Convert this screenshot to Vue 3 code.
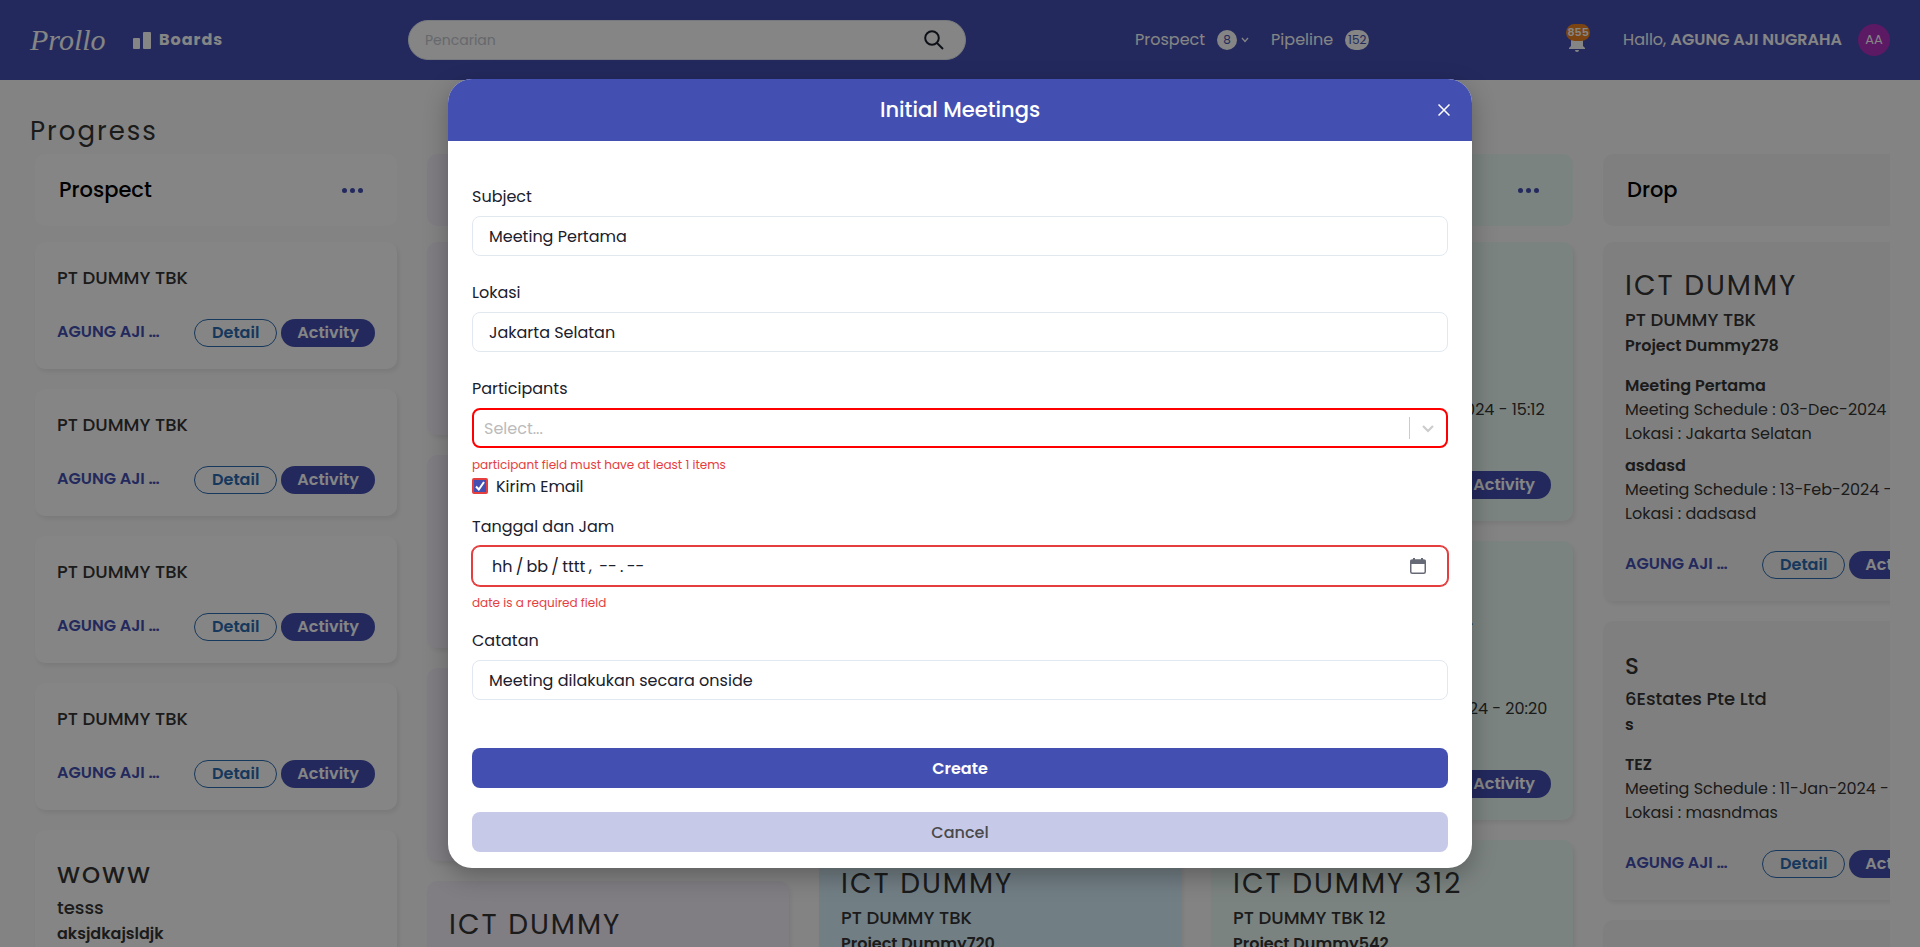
<script setup>
import { ref } from 'vue'

const search = ref('')
const form = ref({
  subject: 'Meeting Pertama',
  location: 'Jakarta Selatan',
  participant: '',
  sendEmail: true,
  date: 'hh\u2009/\u2009bb\u2009/\u2009tttt\u2009, \u2009--\u2009.\u2009--',
  note: 'Meeting dilakukan secara onside',
})

const owner = 'AGUNG AJI …'
const simple = { company: 'PT DUMMY TBK' }
const ict = { title: 'ICT DUMMY', company: 'PT DUMMY TBK', project: 'Project Dummy720' }
const compact = { blank: 'compact' }
const tall = { blank: 'tall' }

const columns = [
  {
    id: 'prospect',
    name: 'Prospect',
    tone: 'white',
    cards: [simple, simple, simple, simple, { title: 'WOWW', small: true, company: 'tesss', project: 'aksjdkajsldjk' }],
  },
  { id: 'meeting', tone: 'purple', cards: [compact, compact, compact, ict] },
  { id: 'proposal', tone: 'blue', cards: [tall, tall, ict] },
  {
    id: 'deal',
    tone: 'green',
    cards: [
      { ...ict, meetings: [{ subject: 'Meeting Pertama', schedule: '03-Dec-2024 - 15:12', place: 'Jakarta' }] },
      {
        ...ict,
        company: 'PT. DUMMY INTERNASIONAL',
        meetings: [{ subject: 'Meeting Pertama', schedule: '14-Feb-2024 - 20:20', place: 'Jakarta' }],
      },
      { title: 'ICT DUMMY 312', company: 'PT DUMMY TBK 12', project: 'Project Dummy542' },
    ],
  },
  {
    id: 'drop',
    name: 'Drop',
    tone: 'grey',
    cards: [
      {
        title: 'ICT DUMMY',
        company: 'PT DUMMY TBK',
        project: 'Project Dummy278',
        meetings: [
          { subject: 'Meeting Pertama', schedule: '03-Dec-2024 - 15:12', place: 'Jakarta Selatan' },
          { subject: 'asdasd', schedule: '13-Feb-2024 - 10:00', place: 'dadsasd' },
        ],
      },
      {
        title: 'S',
        small: true,
        company: '6Estates Pte Ltd',
        project: 's',
        meetings: [{ subject: 'TEZ', schedule: '11-Jan-2024 - 10:00', place: 'masndmas' }],
      },
      compact,
    ],
  },
]
</script>

<template>
  <div class="page">
    <header class="navbar">
      <div class="brand">
        <a href="#" class="logo">Prollo</a>
        <a href="#" class="boards">
          <svg width="18" height="17" viewBox="0 0 18 17" aria-hidden="true">
            <rect x="0" y="6" width="7" height="11" rx="1" />
            <rect x="10" y="0" width="8" height="17" rx="1" />
          </svg>
          Boards
        </a>
      </div>
      <form class="search" @submit.prevent>
        <input v-model="search" type="text" placeholder="Pencarian" aria-label="Pencarian" />
        <button type="submit" aria-label="Cari">
          <svg width="20" height="20" viewBox="0 0 20 20" aria-hidden="true">
            <circle cx="8" cy="8" r="6.8" />
            <path d="M13 13l6 6" />
          </svg>
        </button>
      </form>
      <nav class="links">
        <a href="#">Prospect <span class="count">8</span>
          <svg class="caret" width="8" height="6" viewBox="0 0 8 6" aria-hidden="true"><path d="M1 1l3 3.4L7 1" /></svg>
        </a>
        <a href="#">Pipeline <span class="count">152</span></a>
      </nav>
      <div class="user">
        <button class="bell" aria-label="Notifikasi">
          <svg width="24" height="24" viewBox="0 0 24 24" aria-hidden="true">
            <path d="M12 22a2 2 0 0 0 2-2h-4a2 2 0 0 0 2 2zm6-6v-5c0-3.07-1.63-5.64-4.5-6.32V4a1.5 1.5 0 0 0-3 0v.68C7.64 5.36 6 7.92 6 11v5l-2 2v1h16v-1z" />
          </svg>
          <span>855</span>
        </button>
        <p class="hello">Hallo, <strong>AGUNG AJI NUGRAHA</strong></p>
        <span class="avatar">AA</span>
      </div>
    </header>

    <main class="content">
      <h1>Progress</h1>
      <div class="board">
        <section v-for="col in columns" :key="col.id" class="column" :class="col.tone">
          <div class="column-head">
            <h2>{{ col.name }}</h2>
            <button class="dots" aria-label="Menu"><i></i><i></i><i></i></button>
          </div>
          <article v-for="(card, i) in col.cards" :key="i" class="card" :class="card.blank">
            <template v-if="!card.blank">
              <h3 v-if="card.title"><span :class="{ small: card.small }">{{ card.title }}</span></h3>
              <p class="company">{{ card.company }}</p>
              <p v-if="card.project" class="strong">{{ card.project }}</p>
              <div v-if="card.meetings" class="meetings">
                <div v-for="m in card.meetings" :key="m.subject">
                  <p class="strong">{{ m.subject }}</p>
                  <p>Meeting Schedule : {{ m.schedule }}</p>
                  <p>Lokasi : {{ m.place }}</p>
                </div>
              </div>
              <div class="card-foot">
                <span class="owner">{{ owner }}</span>
                <button class="pill outline">Detail</button>
                <button class="pill">Activity</button>
              </div>
            </template>
          </article>
        </section>
      </div>
    </main>

    <div class="overlay">
      <div class="modal" role="dialog" aria-modal="true" aria-labelledby="modal-title">
        <div class="modal-head">
          <h2 id="modal-title">Initial Meetings</h2>
          <button class="close" aria-label="Tutup">
            <svg width="12" height="12" viewBox="0 0 12 12" aria-hidden="true"><path d="M0.500 0.500l11 11M11.500 0.500l-11 11" /></svg>
          </button>
        </div>
        <form class="form" @submit.prevent>
          <div class="field">
            <label for="subject">Subject</label>
            <input id="subject" v-model="form.subject" type="text" />
          </div>
          <div class="field">
            <label for="location">Lokasi</label>
            <input id="location" v-model="form.location" type="text" />
          </div>
          <div class="field tight">
            <label for="participant">Participants</label>
            <div class="select">
              <select id="participant" v-model="form.participant">
                <option value="">Select...</option>
              </select>
              <svg width="40" height="22" viewBox="0 0 40 22" aria-hidden="true">
                <path class="bar" d="M1.500 0v22" />
                <path class="arrow" d="M15 9l5 5 5-5" />
              </svg>
            </div>
            <p class="error">participant field must have at least 1 items</p>
          </div>
          <label class="check">
            <span class="box">
              <input v-model="form.sendEmail" type="checkbox" />
              <svg width="10" height="10" viewBox="0 0 10 10" aria-hidden="true"><path d="M1 5.500L3.800 8.500 9 1" /></svg>
            </span>
            <span class="check-text">Kirim Email</span>
          </label>
          <div class="field short">
            <label for="date">Tanggal dan Jam</label>
            <div class="date">
              <input id="date" v-model="form.date" type="text" />
              <button type="button" aria-label="Pilih tanggal">
                <svg width="16" height="16" viewBox="0 0 16 16" aria-hidden="true">
                  <rect x="0.750" y="2" width="14.500" height="13.250" rx="1.500" />
                  <path d="M0.500 2h15v4h-15zM3 0h2v3H3zM11 0h2v3h-2z" />
                </svg>
              </button>
            </div>
            <p class="error">date is a required field</p>
          </div>
          <div class="field last">
            <label for="note">Catatan</label>
            <input id="note" v-model="form.note" type="text" />
          </div>
          <button type="submit" class="action create">Create</button>
          <button type="button" class="action cancel">Cancel</button>
        </form>
      </div>
    </div>
  </div>
</template>

<style>
body {
  background: #fcfcfc;
}
</style>

<style scoped>
.page,
.page * {
  box-sizing: border-box;
}
.page {
  position: relative;
  height: 100vh;
  overflow: hidden;
  display: flex;
  flex-direction: column;
  font-family: Poppins, Inter, 'Open Sans', sans-serif;
  font-size: 16px;
  line-height: 24px;
  color: #343434;
}
h1,
h2,
h3,
p {
  margin: 0;
}
a {
  color: inherit;
  text-decoration: none;
}
button,
input,
select {
  font: inherit;
}
button {
  border: 0;
  padding: 0;
  background: none;
}

.navbar {
  flex: none;
  height: 80px;
  padding: 0 30px;
  display: grid;
  grid-template-columns: 378px 30% 1fr auto;
  align-items: center;
  background: #4350b2;
  color: #fff;
}
.brand {
  display: flex;
  align-items: center;
  gap: 28px;
}
.logo {
  width: 75px;
  font-family: 'Liberation Serif', serif;
  font-style: italic;
  font-size: 30px;
  line-height: 32px;
}
.boards {
  display: flex;
  align-items: center;
  gap: 8px;
  font-weight: 700;
  letter-spacing: 1px;
}
.boards svg {
  fill: #fff;
}
.search {
  width: 558px;
  max-width: 100%;
  height: 40px;
  display: flex;
  align-items: center;
  padding: 0 21px 0 16px;
  border: 1px solid #e2e8f0;
  border-radius: 20px;
  background: #fff;
}
.search input {
  flex: 1;
  min-width: 0;
  border: 0;
  padding: 0;
  outline: 0;
  background: none;
  font-size: 14px;
}
.search input::placeholder {
  color: #c4c8d0;
}
.search button {
  display: flex;
}
.search svg {
  fill: none;
  stroke: #1a202c;
  stroke-width: 2;
}
.links {
  display: flex;
  gap: 22px;
  padding-left: 169px;
}
.links a {
  display: flex;
  align-items: center;
}
.count {
  min-width: 20px;
  height: 20px;
  margin-left: 12px;
  padding: 0 3px;
  border-radius: 10px;
  background: #fff;
  color: #4350b2;
  font-size: 12px;
  line-height: 20px;
  text-align: center;
}
.caret {
  margin-left: 4px;
  fill: none;
  stroke: #fff;
  stroke-width: 1.300;
}
.user {
  display: flex;
  align-items: center;
}
.bell {
  position: relative;
  display: flex;
  margin-right: 34px;
  padding-top: 4px;
}
.bell svg {
  fill: #fff;
}
.bell span {
  position: absolute;
  top: -2px;
  left: 1px;
  width: 24px;
  height: 17px;
  border-radius: 9px;
  background: #ed8322;
  color: #fff;
  font-size: 11px;
  font-weight: 600;
  line-height: 17px;
}
.hello strong {
  font-weight: 600;
}
.avatar {
  width: 32px;
  height: 32px;
  margin-left: 16px;
  border-radius: 50%;
  background: #b030c0;
  font-size: 13px;
  line-height: 32px;
  text-align: center;
}

.content {
  flex: 1;
  min-height: 0;
  padding: 32px 30px 0;
}
h1 {
  font-size: 26px;
  line-height: 38px;
  font-weight: 400;
  letter-spacing: 2px;
}
.board {
  display: flex;
  gap: 30px;
  padding: 4px 5px 0;
  overflow: hidden;
}
.column {
  flex: none;
  width: 362px;
  display: flex;
  flex-direction: column;
  gap: 20px;
}
.column-head {
  height: 72px;
  margin-bottom: -4px;
  padding: 0 34px 0 24px;
  display: flex;
  align-items: center;
  justify-content: space-between;
  border-radius: 10px;
  color: #000;
}
.column-head h2 {
  font-size: 21px;
  line-height: 30px;
  font-weight: 500;
}
.dots {
  display: flex;
  gap: 3px;
}
.dots i {
  width: 5px;
  height: 5px;
  border-radius: 50%;
  background: #4350b2;
}
.card {
  padding: 22px;
  border-radius: 10px;
  box-shadow: 2px 3px 5px rgba(0, 0, 0, 0.08);
}
.compact {
  min-height: 193px;
}
.tall {
  min-height: 279px;
}
.white > * {
  background: #fff;
}
.purple > * {
  background: #f6f0fb;
}
.blue > * {
  background: #d9f2fe;
}
.green > * {
  background: #ebfcf5;
}
.grey > * {
  background: #f4f4f4;
}
.card p {
  white-space: nowrap;
}
.card h3 {
  padding-top: 2px;
  font-size: 28px;
  line-height: 40px;
  font-weight: 400;
  letter-spacing: 2px;
}
.card .small {
  font-size: 23px;
  line-height: 24px;
  font-weight: 500;
}
.card .company {
  font-size: 18px;
  line-height: 28px;
  font-weight: 500;
}
.card .strong {
  font-weight: 600;
}
.meetings {
  display: grid;
  gap: 8px;
  padding-top: 16px;
}
.card-foot {
  display: flex;
  align-items: center;
  gap: 4px;
  margin-top: 27px;
}
.meetings + .card-foot {
  margin-top: 25px;
}
.owner {
  flex: 1;
  padding-bottom: 2px;
  color: #4350b2;
  font-weight: 600;
  white-space: nowrap;
}
.pill {
  height: 28px;
  padding: 0 16px;
  border-radius: 14px;
  background: #4350b2;
  color: #fff;
  font-weight: 600;
}
.pill.outline {
  padding: 0 17px;
  border: 1px solid #2b6cb0;
  background: none;
  color: #2b6cb0;
}

.overlay {
  position: absolute;
  inset: 0;
  display: flex;
  align-items: center;
  justify-content: center;
  background: rgba(0, 0, 0, 0.48);
}
.modal {
  width: 1024px;
  max-width: 100%;
  overflow: hidden;
  border-radius: 24px;
  background: #fff;
  color: #1a202c;
  box-shadow: 0 8px 24px rgba(0, 0, 0, 0.28);
}
.modal-head {
  height: 62px;
  display: grid;
  grid-template-columns: 1fr auto 1fr;
  align-items: center;
  padding: 0 22px;
  background: #4350b2;
  color: #fff;
}
.modal-head h2 {
  grid-column: 2;
  font-size: 21px;
  line-height: 30px;
  font-weight: 500;
}
.close {
  justify-self: end;
  display: flex;
}
.close svg {
  fill: none;
  stroke: #fff;
  stroke-width: 1.500;
}
.form {
  display: flex;
  flex-direction: column;
  padding: 43px 24px 16px;
}
.field {
  display: flex;
  flex-direction: column;
  margin-bottom: 24px;
}
.field label {
  margin-bottom: 6px;
  line-height: 26px;
}
.field.tight {
  margin-bottom: 0;
}
.field.short {
  margin-bottom: 16px;
}
.field.last {
  margin-bottom: 48px;
}
.field input,
.field select {
  width: 100%;
  height: 40px;
  padding: 0 16px;
  border: 1px solid #e2e8f0;
  border-radius: 8px;
  outline: 0;
  background: #fff;
  color: #1a202c;
}
.select,
.date {
  display: grid;
  align-items: center;
}
.select > *,
.date > * {
  grid-area: 1 / 1;
}
.select svg {
  justify-self: end;
  fill: none;
  stroke: #ccc;
  pointer-events: none;
}
.select .arrow {
  stroke-width: 2.200;
}
.field select {
  appearance: none;
  padding: 2px 10px 0;
  border: 2px solid #f00;
  color: #bbb;
}
.field .date input {
  padding: 0 19px;
  border-color: #e53e3e;
  box-shadow: 0 0 0 1px #e53e3e;
}
.date button {
  justify-self: end;
  display: flex;
  margin-right: 22px;
}
.date svg {
  fill: #666a76;
}
.date rect {
  fill: none;
  stroke: #666a76;
  stroke-width: 1.500;
}
.error {
  margin-top: 8px;
  color: #e53e3e;
  font-size: 12px;
  line-height: 18px;
}
.check {
  display: flex;
  align-items: center;
  gap: 8px;
  height: 24px;
  margin-bottom: 16px;
}
.check-text {
  line-height: 26px;
  padding-top: 1px;
}
.box {
  display: grid;
  place-items: center;
}
.box > * {
  grid-area: 1 / 1;
}
.box input {
  appearance: none;
  width: 16px;
  height: 16px;
  margin: 0;
  border: 2px solid #e53e3e;
  border-radius: 2px;
}
.box input:checked {
  background: #4350b2;
}
.box svg {
  position: relative;
  fill: none;
  stroke: #fff;
  stroke-width: 2;
  pointer-events: none;
}
.action {
  height: 40px;
  padding-top: 2px;
  border-radius: 8px;
  font-weight: 600;
}
.create {
  margin-bottom: 24px;
  background: #4350b2;
  color: #fff;
}
.cancel {
  background: #c6c9e8;
  color: #4a4a4a;
  font-weight: 500;
}
</style>
